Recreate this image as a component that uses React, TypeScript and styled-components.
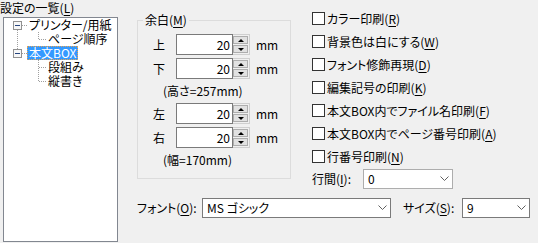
import React from 'react';
import styled, { createGlobalStyle, css } from 'styled-components';

const GlobalStyle = createGlobalStyle`
  html, body {
    margin: 0;
    padding: 0;
    background: #f0f0f0;
  }
  body {
    font-family: "Noto Sans CJK JP", "Noto Sans", sans-serif;
    font-size: 12px;
    color: #000;
    font-feature-settings: "palt";
  }
  u {
    text-decoration-thickness: 1px;
    text-underline-offset: 2px;
  }
`;

const Page = styled.div`
  width: 538px;
  height: 243px;
  display: flex;
  background: #f0f0f0;
  overflow: hidden;
`;

const LeftPane = styled.div`
  width: 118px;
  flex: none;
  display: flex;
  flex-direction: column;
`;

const PaneLabel = styled.div`
  height: 16px;
  line-height: 16px;
  white-space: nowrap;
`;

const TreeBox = styled.div`
  margin: 1px 0 0 3px;
  width: 115px;
  height: 225px;
  box-sizing: border-box;
  border: 1px solid #828790;
  background: #fff;
`;

const TreeRow = styled.div`
  display: flex;
  height: 14px;
  align-items: center;
`;

const Gutter = styled.svg`
  flex: none;
  display: block;
`;

const NodeText = styled.span<{ $selected?: boolean }>`
  height: 14px;
  box-sizing: border-box;
  padding: 0 1px;
  border: 1px solid transparent;
  line-height: 12px;
  white-space: nowrap;
  ${p =>
    p.$selected &&
    css`
      background: #3399ff;
      color: #fff;
      border: 1px dotted #e9a34f;
    `}
`;

const RightPane = styled.div`
  flex: 1;
  padding-left: 19px;
  display: flex;
  flex-direction: column;
`;

const TopSection = styled.div`
  height: 198px;
  display: flex;
`;

const MarginGroup = styled.fieldset`
  margin: 12px 0 0 0;
  padding: 0 0 0 5px;
  width: 154px;
  height: 167px;
  box-sizing: border-box;
  border: 1px solid #dcdcdc;
  min-width: 0;
`;

const Legend = styled.legend`
  padding: 0 2px;
  line-height: 16px;
  height: 16px;
`;

const MarginBody = styled.div`
  margin: 6px 0 0 10px;
  display: flex;
  flex-direction: column;
`;

const SpinRow = styled.div<{ $gap?: number }>`
  display: flex;
  align-items: center;
  height: 21px;
  margin-top: ${p => p.$gap ?? 0}px;
`;

const SideLabel = styled.span`
  width: 23px;
  flex: none;
  line-height: 16px;
`;

const SpinField = styled.div`
  width: 57px;
  height: 21px;
  box-sizing: border-box;
  border: 1px solid #7a7a7a;
  background: #fff;
  text-align: right;
  padding-right: 2px;
  line-height: 19px;
`;

const SpinButtons = styled.div`
  width: 17px;
  height: 21px;
  box-sizing: border-box;
  border: 1px solid #cfcfcf;
  border-left: none;
  padding: 1px 1px 1px 0;
  display: flex;
  flex-direction: column;
  gap: 1px;
  background: #f0f0f0;
`;

const SpinButton = styled.div<{ $down?: boolean }>`
  flex: 1;
  box-sizing: border-box;
  border: 1px solid #adadad;
  background: #e1e1e1;
  display: flex;
  align-items: center;
  justify-content: center;

  &::after {
    content: '';
    width: 0;
    height: 0;
    border-left: 3px solid transparent;
    border-right: 3px solid transparent;
    ${p =>
      p.$down
        ? css`
            border-top: 3px solid #000;
          `
        : css`
            border-bottom: 3px solid #000;
          `}
  }
`;

const Unit = styled.span`
  margin-left: 6px;
  line-height: 16px;
`;

const Note = styled.div<{ $gap: number }>`
  margin: ${p => p.$gap}px 0 0 10px;
  height: 16px;
  line-height: 16px;
  white-space: nowrap;
`;

const OptionList = styled.div`
  margin-left: 21px;
  padding-top: 7px;
  display: flex;
  flex-direction: column;
`;

const OptionRow = styled.div`
  display: flex;
  align-items: center;
  height: 23px;
  white-space: nowrap;
`;

const CheckBox = styled.span`
  width: 13px;
  height: 13px;
  flex: none;
  box-sizing: border-box;
  border: 1px solid #333;
  background: #fff;
  margin-right: 2px;
`;

const SpacingRow = styled.div`
  display: flex;
  align-items: center;
  margin-top: 1px;
  height: 20px;
`;

const FieldLabel = styled.span<{ $width: number; $gap?: number }>`
  width: ${p => p.$width}px;
  margin-left: ${p => p.$gap ?? 0}px;
  flex: none;
  white-space: nowrap;
  line-height: 16px;
`;

const Select = styled.div<{ $width: number; $light?: boolean }>`
  width: ${p => p.$width}px;
  height: 20px;
  flex: none;
  box-sizing: border-box;
  border: 1px solid ${p => (p.$light ? '#adadad' : '#7a7a7a')};
  background: #fff;
  display: flex;
  align-items: center;
  padding: 0 3px 1px 4px;
`;

const SelectValue = styled.span`
  flex: 1;
  line-height: 16px;
  white-space: nowrap;
`;

const ChevronSvg = styled.svg`
  flex: none;
  display: block;
`;

const BottomRow = styled.div`
  display: flex;
  align-items: center;
  height: 20px;
`;

const Chevron = () => (
  <ChevronSvg width="9" height="5" viewBox="0 0 9 5">
    <polyline points="0.5,0.5 4.5,4.5 8.5,0.5" fill="none" stroke="#606060" />
  </ChevronSvg>
);

const Dot = (p: { x1: number; y1: number; x2: number; y2: number }) => (
  <line {...p} stroke="#a0a0a0" strokeDasharray="1 1" />
);

interface ConnectorProps {
  level: 0 | 1;
  above?: boolean;
  below?: boolean;
  trunk?: boolean;
  more?: boolean;
}

const Connector = ({ level, above, below, trunk, more }: ConnectorProps) => {
  const w = level === 0 ? 23 : 42;
  return (
    <Gutter width={w} height={14} viewBox={`0 0 ${w} 14`}>
      {level === 0 ? (
        <>
          {above && <Dot x1={13.5} y1={0} x2={13.5} y2={3} />}
          {below && <Dot x1={13.5} y1={12} x2={13.5} y2={14} />}
          <Dot x1={18} y1={7.5} x2={23} y2={7.5} />
          <rect x={9.5} y={3.5} width={8} height={8} fill="#f7f7f7" stroke="#919191" />
          <line x1={11} y1={7.5} x2={16} y2={7.5} stroke="#27467f" />
        </>
      ) : (
        <>
          {trunk && <Dot x1={13.5} y1={0} x2={13.5} y2={14} />}
          <Dot x1={34.5} y1={0} x2={34.5} y2={more ? 14 : 8} />
          <Dot x1={35} y1={7.5} x2={42} y2={7.5} />
        </>
      )}
    </Gutter>
  );
};

const treeNodes: (ConnectorProps & { label: string; selected?: boolean })[] = [
  { label: 'プリンター/用紙', level: 0, below: true },
  { label: 'ページ順序', level: 1, trunk: true },
  { label: '本文BOX', level: 0, above: true, selected: true },
  { label: '段組み', level: 1, more: true },
  { label: '縦書き', level: 1 },
];

const Spin = ({ label, value }: { label: string; value: string }) => (
  <>
    <SideLabel>{label}</SideLabel>
    <SpinField>{value}</SpinField>
    <SpinButtons>
      <SpinButton />
      <SpinButton $down />
    </SpinButtons>
    <Unit>mm</Unit>
  </>
);

const options: [string, string, string][] = [
  ['カラー印刷(', 'R', ')'],
  ['背景色は白にする(', 'W', ')'],
  ['フォント修飾再現(', 'D', ')'],
  ['編集記号の印刷(', 'K', ')'],
  ['本文BOX内でファイル名印刷(', 'F', ')'],
  ['本文BOX内でページ番号印刷(', 'A', ')'],
  ['行番号印刷(', 'N', ')'],
];

export default function App() {
  return (
    <>
      <GlobalStyle />
      <Page>
        <LeftPane>
          <PaneLabel>
            設定の一覧(<u>L</u>)
          </PaneLabel>
          <TreeBox>
            {treeNodes.map(n => (
              <TreeRow key={n.label}>
                <Connector {...n} />
                <NodeText $selected={n.selected}>{n.label}</NodeText>
              </TreeRow>
            ))}
          </TreeBox>
        </LeftPane>

        <RightPane>
          <TopSection>
            <MarginGroup>
              <Legend>
                余白(<u>M</u>)
              </Legend>
              <MarginBody>
                <SpinRow>
                  <Spin label="上" value="20" />
                </SpinRow>
                <SpinRow $gap={3}>
                  <Spin label="下" value="20" />
                </SpinRow>
                <Note $gap={4}>(高さ=257mm)</Note>
                <SpinRow $gap={4}>
                  <Spin label="左" value="20" />
                </SpinRow>
                <SpinRow $gap={3}>
                  <Spin label="右" value="20" />
                </SpinRow>
                <Note $gap={4}>(幅=170mm)</Note>
              </MarginBody>
            </MarginGroup>

            <OptionList>
              {options.map(([head, key, tail]) => (
                <OptionRow key={key}>
                  <CheckBox />
                  <span>
                    {head}
                    <u>{key}</u>
                    {tail}
                  </span>
                </OptionRow>
              ))}
              <SpacingRow>
                <FieldLabel $width={51}>
                  行間(<u>I</u>):
                </FieldLabel>
                <Select $width={90} $light>
                  <SelectValue>0</SelectValue>
                  <Chevron />
                </Select>
              </SpacingRow>
            </OptionList>
          </TopSection>

          <BottomRow>
            <FieldLabel $width={65}>
              フォント(<u>O</u>):
            </FieldLabel>
            <Select $width={189}>
              <SelectValue>MS ゴシック</SelectValue>
              <Chevron />
            </Select>
            <FieldLabel $width={59} $gap={12}>
              サイズ(<u>S</u>):
            </FieldLabel>
            <Select $width={68}>
              <SelectValue>9</SelectValue>
              <Chevron />
            </Select>
          </BottomRow>
        </RightPane>
      </Page>
    </>
  );
}
